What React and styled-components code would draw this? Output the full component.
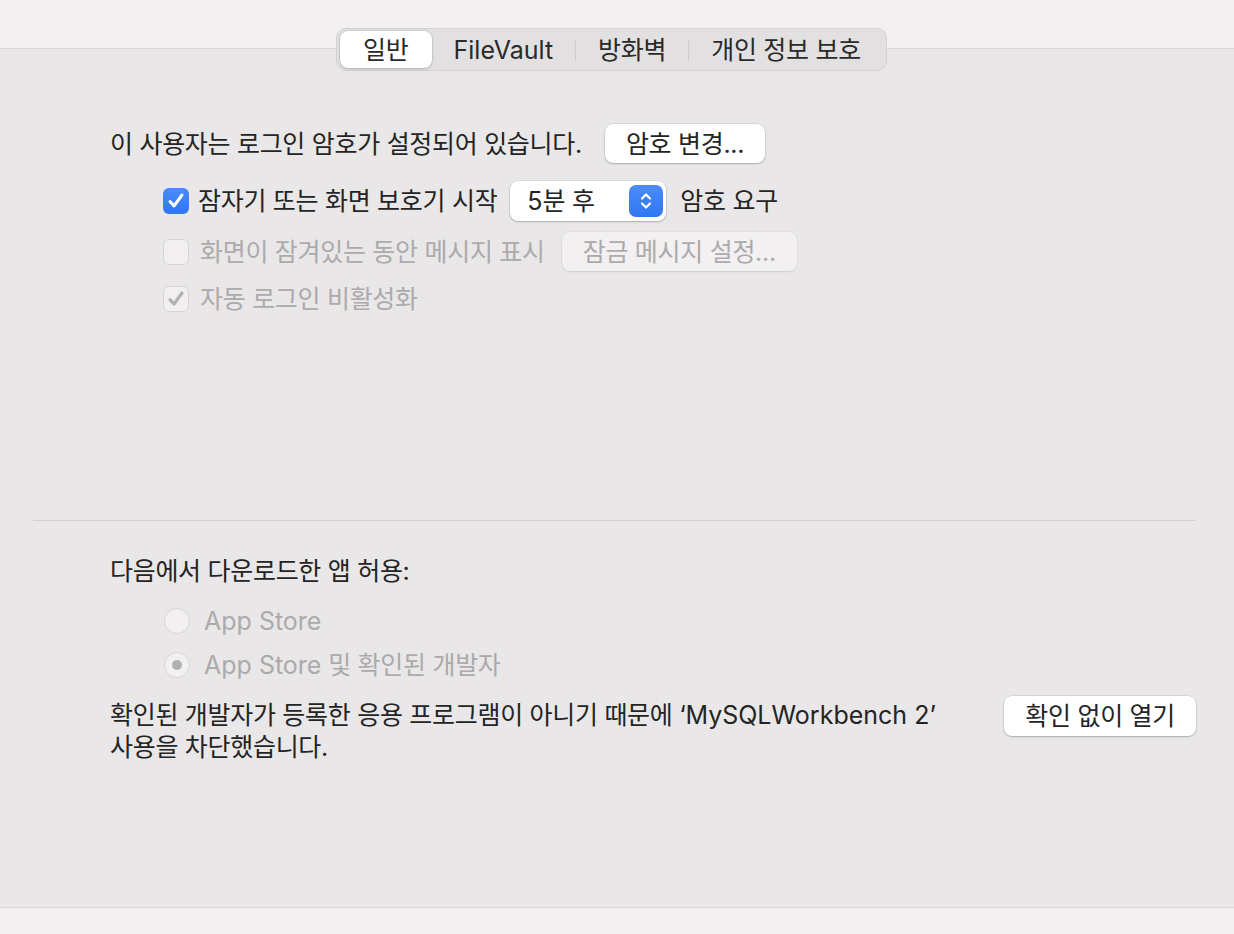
import React from "react"
import styled, { createGlobalStyle } from "styled-components"

const GlobalStyle = createGlobalStyle`
  html, body, #root { margin: 0; padding: 0; height: 100%; }
  body {
    font-family: Inter, "Noto Sans CJK KR", sans-serif;
    font-size: 25px;
    line-height: 26px;
    letter-spacing: -0.3px;
    color: #242424;
    background: #f2f0f1;
  }
`

const Page = styled.div`
  height: 100vh;
  display: flex;
  flex-direction: column;
`

const TopBar = styled.div`
  height: 48px;
  flex-shrink: 0;
  background: #f2f0f1;
  border-bottom: 1px solid #d9d7d8;
`

const Panel = styled.div`
  flex: 1;
  background: #e9e7e8;
  padding: 0 38px 0 33px;
  display: flex;
  flex-direction: column;
`

const BottomBar = styled.div`
  height: 26px;
  flex-shrink: 0;
  background: #f2f0f1;
  border-top: 1px solid #d6d4d5;
`

const Tabs = styled.div`
  align-self: center;
  margin-top: -21px;
  transform: translateX(-3px);
  height: 43px;
  box-sizing: border-box;
  display: flex;
  align-items: center;
  padding: 0 3px;
  background: #e2e0e1;
  border: 1px solid #d4d2d3;
  border-radius: 10px;
`

const Tab = styled.div`
  height: 37px;
  display: flex;
  align-items: center;
  padding: 0 ${(p) => (p.$active ? 23 : 22)}px;
  border-radius: 8px;
  background: ${(p) => (p.$active ? "#ffffff" : "transparent")};
  box-shadow: ${(p) =>
    p.$active ? "0 0 0 0.5px rgba(0,0,0,0.1), 0 1px 3px rgba(0,0,0,0.18)" : "none"};
  color: #2a2a2a;
`

const TabSep = styled.div`
  width: 1px;
  height: 22px;
  background: #cfcdce;
`

const Latin = styled.span`
  font-family: Inter, sans-serif;
  font-size: ${(p) => p.$size || 25}px;
  letter-spacing: 0;
`

const Row = styled.div`
  display: flex;
  align-items: center;
  margin-top: ${(p) => p.$mt}px;
  padding-left: ${(p) => p.$indent || 0}px;
  gap: ${(p) => p.$gap || 10}px;
  color: ${(p) => (p.$disabled ? "#acaaab" : "inherit")};
`

const Button = styled.div`
  height: ${(p) => p.$h || 39}px;
  box-sizing: border-box;
  display: flex;
  align-items: center;
  justify-content: center;
  padding: 0 21px;
  border-radius: 8px;
  background: ${(p) => (p.$disabled ? "#f2f0f1" : "#ffffff")};
  color: ${(p) => (p.$disabled ? "#acaaab" : "#242424")};
  box-shadow: ${(p) =>
    p.$disabled
      ? "0 0 0 0.5px rgba(0,0,0,0.06), 0 1px 2px rgba(0,0,0,0.08)"
      : "0 0 0 0.5px rgba(0,0,0,0.12), 0 1px 2px rgba(0,0,0,0.22)"};
  margin-left: ${(p) => p.$ml || 0}px;
  flex-shrink: 0;
`

const Box = styled.div`
  width: 26px;
  height: 26px;
  box-sizing: border-box;
  border-radius: 6px;
  display: flex;
  align-items: center;
  justify-content: center;
  flex-shrink: 0;
  background: ${(p) =>
    p.$checked && !p.$disabled
      ? "linear-gradient(#4a8cf8, #2f76f2)"
      : "#f1eff0"};
  border: ${(p) => (p.$checked && !p.$disabled ? "none" : "1px solid #d6d4d5")};
`

const Radio = styled.div`
  width: 26px;
  height: 26px;
  box-sizing: border-box;
  border-radius: 50%;
  background: #f2f0f1;
  border: 1px solid #d6d4d5;
  display: flex;
  align-items: center;
  justify-content: center;
  flex-shrink: 0;

  &::after {
    content: "";
    width: 10px;
    height: 10px;
    border-radius: 50%;
    background: ${(p) => (p.$checked ? "#b2b0b1" : "transparent")};
  }
`

const Select = styled.div`
  width: 156px;
  height: 40px;
  box-sizing: border-box;
  display: flex;
  align-items: center;
  justify-content: space-between;
  padding: 0 3px 0 17px;
  margin-left: 4px;
  border-radius: 8px;
  background: #ffffff;
  box-shadow: 0 0 0 0.5px rgba(0,0,0,0.12), 0 1px 2px rgba(0,0,0,0.22);
`

const Stepper = styled.div`
  width: 34px;
  height: 32px;
  border-radius: 7px;
  background: linear-gradient(#4a8cf8, #2f76f2);
  display: flex;
  align-items: center;
  justify-content: center;
`

const Divider = styled.div`
  height: 1px;
  background: #d2d0d1;
  margin-top: ${(p) => p.$mt}px;
`

const Heading = styled.div`
  margin-top: 34px;
  padding-left: 77px;
  line-height: 32px;
`

const NoticeRow = styled.div`
  margin-top: 18px;
  padding-left: 77px;
  display: flex;
  justify-content: space-between;
  align-items: flex-start;
`

const Notice = styled.div`
  margin-top: 3px;
  line-height: 32px;
`

const Check = ({ color, width = 3 }) => (
  <svg width="20" height="20" viewBox="0 0 20 20">
    <path
      d="M4 10.6 L8 15 L16 4"
      fill="none"
      stroke={color}
      strokeWidth={width}
      strokeLinecap="round"
      strokeLinejoin="round"
    />
  </svg>
)

const Chevrons = () => (
  <svg width="16" height="24" viewBox="0 0 16 24">
    <path
      d="M4 9.5 L8 5.5 L12 9.5 M4 14.5 L8 18.5 L12 14.5"
      fill="none"
      stroke="#ffffff"
      strokeWidth="2.2"
      strokeLinecap="round"
      strokeLinejoin="round"
    />
  </svg>
)

export default function App() {
  return (
    <Page>
      <GlobalStyle />
      <TopBar />
      <Panel>
        <Tabs>
          <Tab $active>일반</Tab>
          <Tab><Latin>FileVault</Latin></Tab>
          <TabSep />
          <Tab>방화벽</Tab>
          <TabSep />
          <Tab>개인 정보 보호</Tab>
        </Tabs>

        <Row $mt={53} $indent={77}>
          <span>이 사용자는 로그인 암호가 설정되어 있습니다.</span>
          <Button $ml={13}>암호 변경...</Button>
        </Row>

        <Row $mt={18} $indent={130} $gap={9}>
          <Box $checked>
            <Check color="#ffffff" />
          </Box>
          <span>잠자기 또는 화면 보호기 시작</span>
          <Select>
            <span>
              <Latin>5</Latin>분 후
            </span>
            <Stepper>
              <Chevrons />
            </Stepper>
          </Select>
          <span style={{ marginLeft: 5 }}>암호 요구</span>
        </Row>

        <Row $mt={11} $indent={130} $gap={11} $disabled>
          <Box $disabled />
          <span>화면이 잠겨있는 동안 메시지 표시</span>
          <Button $disabled $ml={6}>잠금 메시지 설정...</Button>
        </Row>

        <Row $mt={15} $indent={130} $gap={11} $disabled>
          <Box $checked $disabled>
            <Check color="#b3b1b2" width={3.2} />
          </Box>
          <span>자동 로그인 비활성화</span>
        </Row>

        <Divider $mt={208} />

        <Heading>다음에서 다운로드한 앱 허용:</Heading>

        <Row $mt={21} $indent={131} $gap={14} $disabled>
          <Radio />
          <Latin>App Store</Latin>
        </Row>
        <Row $mt={18} $indent={131} $gap={14} $disabled>
          <Radio $checked />
          <span>
            <Latin>App Store</Latin> 및 확인된 개발자
          </span>
        </Row>

        <NoticeRow>
          <Notice>
            확인된 개발자가 등록한 응용 프로그램이 아니기 때문에 ‘
            <Latin>MySQLWorkbench 2</Latin>’
            <br />
            사용을 차단했습니다.
          </Notice>
          <Button $h={40}>확인 없이 열기</Button>
        </NoticeRow>
      </Panel>
      <BottomBar />
    </Page>
  )
}
